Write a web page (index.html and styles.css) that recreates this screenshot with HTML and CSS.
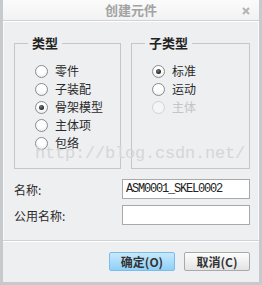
FILE: index.html
```html
<!DOCTYPE html>
<html lang="zh-CN">
<head>
    <meta charset="UTF-8">
    <title>创建元件</title>
    <link rel="stylesheet" href="styles.css">
</head>
<body>
    <div class="window">
        <div class="titlebar">
            <span class="title">创建元件</span>
            <span class="close">
                <svg width="8" height="8" viewBox="0 0 8 8"><path d="M1 1L7 7M7 1L1 7" stroke="#b4b4b4" stroke-width="2"/></svg>
            </span>
        </div>

        <div class="panel">
            <div class="groups">
                <fieldset class="group group-type">
                    <legend>类型</legend>
                    <label class="option"><span class="radio"></span>零件</label>
                    <label class="option"><span class="radio"></span>子装配</label>
                    <label class="option"><span class="radio checked"></span>骨架模型</label>
                    <label class="option"><span class="radio"></span>主体项</label>
                    <label class="option"><span class="radio"></span>包络</label>
                </fieldset>
                <fieldset class="group group-sub">
                    <legend>子类型</legend>
                    <label class="option"><span class="radio checked"></span>标准</label>
                    <label class="option"><span class="radio"></span>运动</label>
                    <label class="option disabled"><span class="radio"></span>主体</label>
                </fieldset>
            </div>

            <div class="fields">
                <div class="field">
                    <span class="field-label">名称:</span>
                    <input class="field-input" type="text" value="ASM0001_SKEL0002">
                </div>
                <div class="field">
                    <span class="field-label">公用名称:</span>
                    <input class="field-input" type="text" value="">
                </div>
            </div>
        </div>

        <div class="footer">
            <button class="btn btn-ok">确定(O)</button>
            <button class="btn">取消(C)</button>
        </div>

        <!-- blog watermark over the dialog -->
        <div class="watermark">http://blog.csdn.net/</div>
    </div>
</body>
</html>
```

FILE: styles.css
```css
body {
    margin: 0;
    padding: 0;
    background: #eeeff1;
    font-family: "Noto Sans CJK SC", sans-serif;
    font-size: 12px;
    color: #2a2a2a;
}

.window {
    position: relative;
    width: 262px;
    height: 285px;
    box-sizing: border-box;
    border: 3px solid #c7cacd;
    border-top: 0;
    background: #eeeff1;
}

/* Title bar */
.titlebar {
    height: 20px;
    display: flex;
    justify-content: center;
    align-items: center;
    position: relative;
    background: linear-gradient(#fbfbfb, #f2f2f2);
    border-bottom: 1px solid #cfd2d6;
}

.title {
    font-size: 13px;
    font-weight: bold;
    color: #a3a3a3;
    line-height: 20px;
}

.close {
    position: absolute;
    right: 9px;
    top: 7px;
    width: 8px;
    height: 8px;
    display: flex;
}

/* Main panel */
.panel {
    height: 219px;
    box-sizing: border-box;
    border-top: 1px solid #fff;
    border-left: 1px solid #fafafa;
    border-right: 1px solid #fafafa;
    padding: 13px 8px 0 10px;
}

.groups {
    display: flex;
    gap: 10px;
}

.group {
    margin: 0;
    padding: 11px 0 0 0;
    border: 1px solid #c6c6c6;
    height: 134px;
    box-sizing: border-box;
}

.group legend {
    font-size: 13px;
    font-weight: bold;
    line-height: 16px;
    color: #222;
    padding: 0 4px;
    margin-left: 13px;
}

.group-type {
    width: 107px;
}

.group-sub {
    width: 119px;
}

.group-type .option {
    padding-left: 20px;
}

.group-sub .option {
    padding-left: 20px;
}

.option {
    display: flex;
    align-items: center;
    height: 18px;
    line-height: 18px;
    color: #2a2a2a;
}

.option.disabled {
    color: #c4c4c4;
}

/* Radio circles */
.radio {
    width: 11px;
    height: 11px;
    border-radius: 50%;
    border: 1px solid #8c8c8c;
    background: radial-gradient(circle at 50% 35%, #ffffff 40%, #e4e4e4 100%);
    margin-right: 7px;
    position: relative;
    flex-shrink: 0;
}

.radio.checked::after {
    content: "";
    position: absolute;
    left: 3px;
    top: 3px;
    width: 5px;
    height: 5px;
    border-radius: 50%;
    background: radial-gradient(circle at 40% 35%, #777 0%, #222 70%);
}

.option.disabled .radio {
    border-color: #d2d2d2;
    background: #f5f5f5;
}

/* Name fields */
.fields {
    margin-top: 10px;
    display: flex;
    flex-direction: column;
    gap: 6px;
}

.field {
    display: flex;
    align-items: center;
    justify-content: space-between;
    height: 20px;
}

.field-label {
    color: #2a2a2a;
}

.field-input {
    width: 128px;
    height: 20px;
    box-sizing: border-box;
    margin: 0;
    padding: 0 0 0 3px;
    border: 1px solid #a9a9a9;
    background: #fff;
    font-family: "Liberation Mono", monospace;
    font-size: 12px;
    letter-spacing: -1.2px;
    color: #222;
    outline: none;
}

/* Footer */
.footer {
    border-top: 1px solid #cfd2d6;
    box-shadow: inset 0 1px 0 #fff;
    display: flex;
    justify-content: flex-end;
    gap: 9px;
    padding: 11px 9px 0 0;
}

.btn {
    width: 66px;
    height: 19px;
    padding: 0;
    border: 1px solid #a9a9a9;
    border-radius: 2px;
    background: linear-gradient(#fdfdfd, #e3e3e3);
    font-family: "Noto Sans CJK SC", sans-serif;
    font-size: 12px;
    font-weight: bold;
    color: #333;
    line-height: 17px;
}

.btn-ok {
    border-color: #7cbde6;
    background: linear-gradient(#c8e8fc, #8fd0f8);
}

/* Watermark */
.watermark {
    position: absolute;
    left: 32px;
    top: 144px;
    font-family: "Liberation Mono", monospace;
    font-size: 17px;
    letter-spacing: -0.2px;
    color: #d6d6d6;
    white-space: nowrap;
    pointer-events: none;
}
```
